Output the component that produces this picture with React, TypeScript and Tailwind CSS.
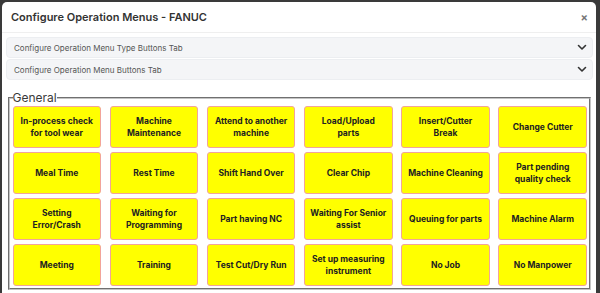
import React from 'react';

const menus: string[][] = [
  ['In-process check', 'for tool wear'],
  ['Machine', 'Maintenance'],
  ['Attend to another', 'machine'],
  ['Load/Upload', 'parts'],
  ['Insert/Cutter', 'Break'],
  ['Change Cutter'],
  ['Meal Time'],
  ['Rest Time'],
  ['Shift Hand Over'],
  ['Clear Chip'],
  ['Machine Cleaning'],
  ['Part pending', 'quality check'],
  ['Setting', 'Error/Crash'],
  ['Waiting for', 'Programming'],
  ['Part having NC'],
  ['Waiting For Senior', 'assist'],
  ['Queuing for parts'],
  ['Machine Alarm'],
  ['Meeting'],
  ['Training'],
  ['Test Cut/Dry Run'],
  ['Set up measuring', 'instrument'],
  ['No Job'],
  ['No Manpower'],
];

function Chevron() {
  return (
    <svg width="10" height="7" viewBox="0 0 10 7" fill="none">
      <path d="M1.5 1.5 L5 5 L8.5 1.5" stroke="#333" strokeWidth="1.6" strokeLinecap="round" strokeLinejoin="round" />
    </svg>
  );
}

function AccordionRow({ label }: { label: string }) {
  return (
    <div className="flex items-center justify-between h-[21px] pl-[7px] pr-[5px] bg-[#f4f5f7] border border-[#eceef1] rounded-[4px]">
      <span className="text-[8px] text-[#555]">{label}</span>
      <Chevron />
    </div>
  );
}

export default function App() {
  return (
    <div className="w-[600px] h-[293px] overflow-hidden bg-[#3a3a3a] pt-[2px] pl-[2px] pr-[4px] font-['Inter',sans-serif]">
      <div className="bg-white rounded-t-[5px] h-full">
        {/* Header */}
        <div className="flex items-center justify-between h-[31px] pl-[9px] pr-[8px] border-b border-[#efefef]">
          <h1 className="text-[11px] font-semibold text-[#333]">Configure Operation Menus - FANUC</h1>
          <span className="text-[11px] font-bold text-[#777] leading-none">×</span>
        </div>

        {/* Body */}
        <div className="pl-[4px] pr-[3px] pt-[4px]">
          <div className="flex flex-col gap-[1px]">
            <AccordionRow label="Configure Operation Menu Type Buttons Tab" />
            <AccordionRow label="Configure Operation Menu Buttons Tab" />
          </div>

          <fieldset className="mt-[10px] ml-[1.5px] mr-[2px] pl-[3px] pr-[2px] pb-[2px] border-2 [border-style:groove] border-[#c4c4c4]">
            <legend className="text-[12px] text-[#3a3a3a] leading-[16px]">General</legend>
            <div className="grid grid-cols-6 gap-x-[8.7px] gap-y-[4px]">
              {menus.map((lines) => (
                <button
                  key={lines.join(' ')}
                  className="h-[42px] bg-[#ffff00] border border-[#f2a49a] rounded-[3px] flex flex-col items-center justify-center text-center text-[8.5px] leading-[12.5px] font-bold text-[#222] whitespace-nowrap"
                >
                  {lines.map((l) => (
                    <span key={l}>{l}</span>
                  ))}
                </button>
              ))}
            </div>
          </fieldset>
        </div>
      </div>
    </div>
  );
}
